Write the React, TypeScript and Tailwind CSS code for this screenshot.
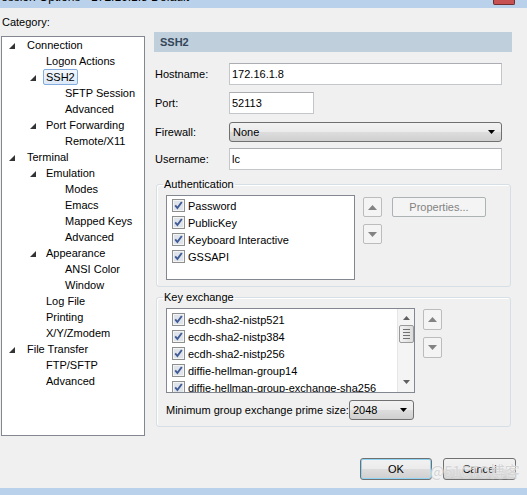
import React from 'react';

type Node = { label: string; level: 0 | 1 | 2; open?: boolean; selected?: boolean };

const tree: Node[] = [
  { label: 'Connection', level: 0, open: true },
  { label: 'Logon Actions', level: 1 },
  { label: 'SSH2', level: 1, open: true, selected: true },
  { label: 'SFTP Session', level: 2 },
  { label: 'Advanced', level: 2 },
  { label: 'Port Forwarding', level: 1, open: true },
  { label: 'Remote/X11', level: 2 },
  { label: 'Terminal', level: 0, open: true },
  { label: 'Emulation', level: 1, open: true },
  { label: 'Modes', level: 2 },
  { label: 'Emacs', level: 2 },
  { label: 'Mapped Keys', level: 2 },
  { label: 'Advanced', level: 2 },
  { label: 'Appearance', level: 1, open: true },
  { label: 'ANSI Color', level: 2 },
  { label: 'Window', level: 2 },
  { label: 'Log File', level: 1 },
  { label: 'Printing', level: 1 },
  { label: 'X/Y/Zmodem', level: 1 },
  { label: 'File Transfer', level: 0, open: true },
  { label: 'FTP/SFTP', level: 1 },
  { label: 'Advanced', level: 1 },
];

const indent = ['w-[24px] pr-[12px]', 'w-[43px] pr-[10px]', 'w-[62px]'];

const OpenArrow = () => (
  <svg width="6" height="6" viewBox="0 0 6 6" className="mt-[2px]">
    <polygon points="6,0 6,6 0,6" fill="#333" />
  </svg>
);

const Check = () => (
  <svg width="13" height="13" viewBox="0 0 13 13" className="shrink-0">
    <rect x="0.5" y="0.5" width="12" height="12" fill="#f4f4f4" stroke="#8e8f8f" />
    <rect x="2" y="2" width="9" height="9" fill="#dfe3ea" />
    <path d="M3.2 6.4 L5.4 9 L9.8 3" stroke="#3f5c98" strokeWidth="1.9" fill="none" />
  </svg>
);

const winBtn =
  'border border-[#707070] rounded-[3px] bg-[linear-gradient(to_bottom,#f2f2f2_0%,#ebebeb_50%,#dddddd_51%,#cfcfcf_100%)]';

const Combo = ({ value, className }: { value: string; className: string }) => (
  <div className={`${winBtn} h-[20px] flex items-center justify-between pl-[3px] pr-[6px] ${className}`}>
    <span>{value}</span>
    <svg width="7" height="4" viewBox="0 0 7 4">
      <polygon points="0,0 7,0 3.5,4" fill="#000" />
    </svg>
  </div>
);

const MoveBtn = ({ up, className = '' }: { up?: boolean; className?: string }) => (
  <div className={`w-[19px] h-[20px] border border-[#bcbcbc] rounded-[2px] bg-[#f4f4f4] flex items-center justify-center ${className}`}>
    <svg width="9" height="5" viewBox="0 0 9 5">
      <polygon points={up ? '0,5 9,5 4.5,0' : '0,0 9,0 4.5,5'} fill="#838383" />
    </svg>
  </div>
);

const CheckItem = ({ label }: { label: string }) => (
  <div className="h-[17px] flex items-center gap-[3px] whitespace-nowrap">
    <Check />
    <span>{label}</span>
  </div>
);

const Field = ({ label, children, className = '' }: { label: string; children: React.ReactNode; className?: string }) => (
  <div className={`flex items-center ${className}`}>
    <span className="w-[75px] pl-[1px]">{label}</span>
    {children}
  </div>
);

const inputCls = 'h-[22px] bg-white border border-[#c3c6cb] border-t-[#abadb3] flex items-center px-[2px]';

export default function App() {
  return (
    <div className="w-[527px] h-[495px] bg-[#f0f0f0] relative overflow-hidden flex flex-col font-['Liberation_Sans',Arial,sans-serif] text-[11px] text-black leading-[14px]">
      {/* title bar, cut off */}
      <div className="h-[8px] bg-[#b9d1ea] flex justify-between overflow-hidden shrink-0">
        <div className="-mt-[10px] -ml-[7px] text-[12px] leading-[14px] whitespace-nowrap">Session Options - 172.16.1.8 Default</div>
        <div className="w-[22px] h-[5px] mr-[12px] bg-[#c75050] border border-t-0 border-[#6e2e2e] rounded-b-[2px]" />
      </div>

      <div className="flex-1 flex flex-col">
        <div className="flex items-start">
          {/* category tree */}
          <div className="ml-[1px] w-[144px]">
            <div className="mt-[7px] ml-[1px] h-[14px]">Category:</div>
            <div className="mt-[7px] h-[400px] bg-white border border-[#828790] pl-[1px]">
              {tree.map((n, i) => (
                <div key={i} className="h-[16px] flex items-center whitespace-nowrap">
                  <div className={`${indent[n.level]} h-full flex items-center justify-end shrink-0`}>
                    {n.open && n.level < 2 ? <OpenArrow /> : null}
                  </div>
                  {n.selected ? (
                    <span className="-ml-[3px] px-[2px] h-[16px] leading-[14px] border border-[#84acdd] rounded-[2px] bg-[linear-gradient(to_bottom,#f3f8fd,#dce9f8)]">
                      {n.label}
                    </span>
                  ) : (
                    <span>{n.label}</span>
                  )}
                </div>
              ))}
            </div>
          </div>

          {/* SSH2 panel */}
          <div className="ml-[9px] mt-[24px] w-[358px]">
            <div className="h-[20px] bg-[#c0cfdc] flex items-center pl-[6px] font-bold text-[#34465a]">SSH2</div>

            <Field label="Hostname:" className="mt-[11px]">
              <div className={`${inputCls} w-[273px]`}>172.16.1.8</div>
            </Field>
            <Field label="Port:" className="mt-[7px]">
              <div className={`${inputCls} w-[85px]`}>52113</div>
            </Field>
            <Field label="Firewall:" className="mt-[8px]">
              <Combo value="None" className="w-[273px]" />
            </Field>
            <Field label="Username:" className="mt-[6px]">
              <div className={`${inputCls} w-[273px]`}>lc</div>
            </Field>

            <fieldset className="mt-[7px] ml-[2px] w-[355px] border border-[#d5dfe5] rounded-[3px] shadow-[inset_1px_1px_0_#fff] px-[9px] pb-[6px]">
              <legend className="-ml-[3px] px-[1px] h-[14px]">Authentication</legend>
              <div className="mt-[4px] flex items-start">
                <div className="w-[189px] h-[85px] bg-white border border-[#828790] pl-[5px] pt-[1px]">
                  <CheckItem label="Password" />
                  <CheckItem label="PublicKey" />
                  <CheckItem label="Keyboard Interactive" />
                  <CheckItem label="GSSAPI" />
                </div>
                <div className="ml-[8px] mt-[2px] flex flex-col gap-[7px]">
                  <MoveBtn up />
                  <MoveBtn />
                </div>
                <div className="ml-[10px] mt-[2px] w-[94px] h-[20px] border border-[#adb2b5] rounded-[2px] bg-[#f4f4f4] text-[#838383] flex items-center justify-center">
                  Properties...
                </div>
              </div>
            </fieldset>

            <fieldset className="mt-[3px] ml-[2px] w-[355px] border border-[#d5dfe5] rounded-[3px] shadow-[inset_1px_1px_0_#fff] px-[9px] pb-[6px]">
              <legend className="-ml-[3px] px-[1px] h-[14px]">Key exchange</legend>
              <div className="mt-[4px] flex items-start">
                <div className="w-[249px] h-[85px] bg-white border border-[#828790] flex overflow-hidden">
                  <div className="flex-1 pl-[5px] pt-[2px] overflow-hidden">
                    <CheckItem label="ecdh-sha2-nistp521" />
                    <CheckItem label="ecdh-sha2-nistp384" />
                    <CheckItem label="ecdh-sha2-nistp256" />
                    <CheckItem label="diffie-hellman-group14" />
                    <CheckItem label="diffie-hellman-group-exchange-sha256" />
                  </div>
                  <div className="w-[17px] h-full bg-[#f4f4f4] border-l border-[#e6e6e6] flex flex-col items-center">
                    <svg width="7" height="4" viewBox="0 0 7 4" className="mt-[7px]">
                      <polygon points="0,4 7,4 3.5,0" fill="#606060" />
                    </svg>
                    <div className="mt-[5px] w-[15px] h-[18px] border border-[#9a9a9a] rounded-[2px] bg-[linear-gradient(to_right,#f2f2f2,#dcdcdc)] flex flex-col items-center justify-center gap-[2px]">
                      <div className="w-[7px] h-[1px] bg-[#707070]" />
                      <div className="w-[7px] h-[1px] bg-[#707070]" />
                      <div className="w-[7px] h-[1px] bg-[#707070]" />
                      <div className="w-[7px] h-[1px] bg-[#707070]" />
                    </div>
                    <div className="flex-1" />
                    <svg width="7" height="4" viewBox="0 0 7 4" className="mb-[8px]">
                      <polygon points="0,0 7,0 3.5,4" fill="#606060" />
                    </svg>
                  </div>
                </div>
                <div className="ml-[8px] mt-[1px] flex flex-col gap-[7px]">
                  <MoveBtn up className="h-[21px]" />
                  <MoveBtn className="h-[21px]" />
                </div>
              </div>
              <div className="mt-[7px] flex items-center">
                <span className="w-[183px]">Minimum group exchange prime size:</span>
                <Combo value="2048" className="w-[65px]" />
              </div>
            </fieldset>
          </div>
        </div>

        {/* dialog buttons */}
        <div className="mt-[22px] flex justify-end gap-[11px] pr-[11px]">
          <div className={`${winBtn} w-[72px] h-[22px] flex items-center justify-center border-[#3c7fb1] shadow-[inset_0_0_0_1px_#8ed4f5]`}>OK</div>
          <div className={`${winBtn} w-[73px] h-[22px] flex items-center justify-center`}>Cancel</div>
        </div>
      </div>

      <div className="h-[7px] bg-[#b9d1ea] shrink-0" />

      {/* watermark */}
      <div className="absolute left-[430px] top-[462px] text-[15px] leading-[18px] text-[#d4d4d4] font-['Noto_Sans_CJK_SC',sans-serif] [text-shadow:0_0_2px_#fff]">
        @51CTO博客
      </div>
    </div>
  );
}
